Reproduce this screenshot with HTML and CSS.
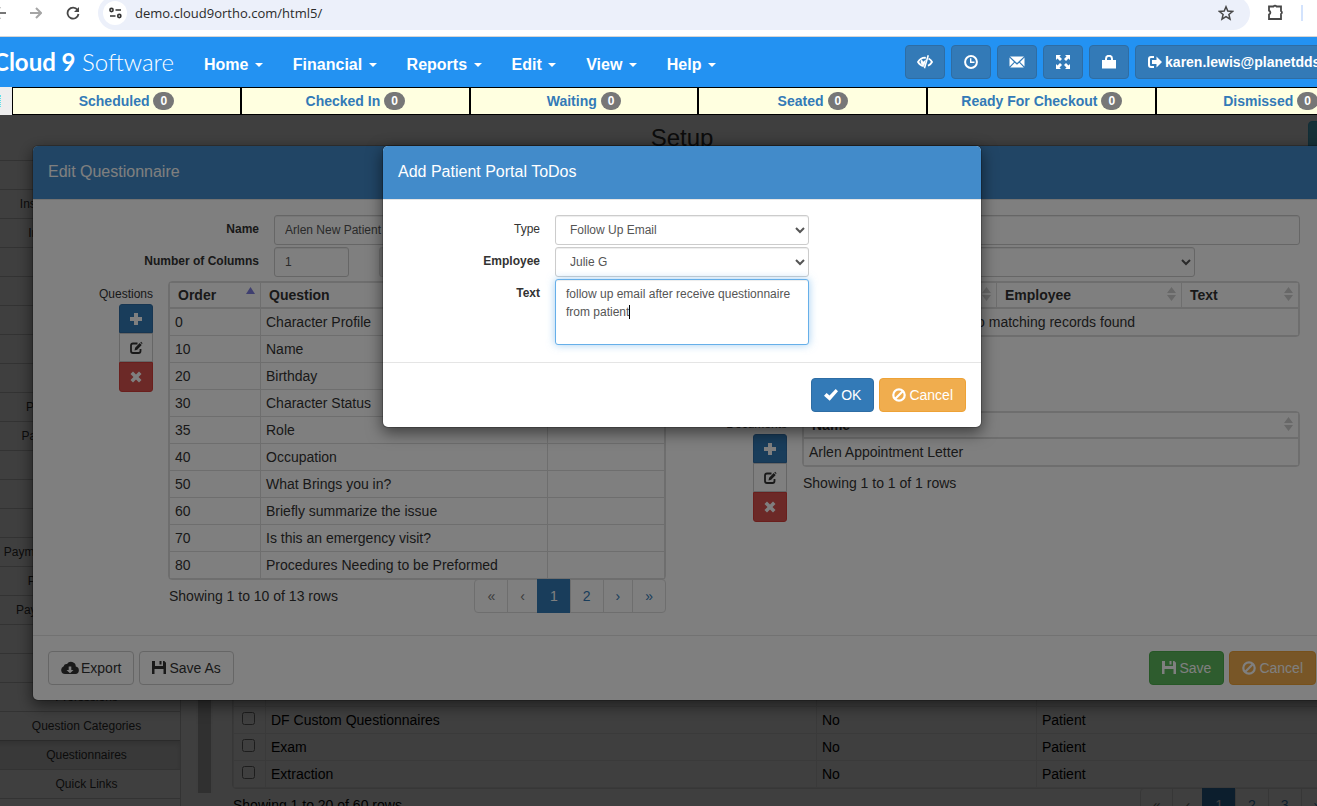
FILE: index.html
```html
<!DOCTYPE html>
<html lang="en">
<head>
    <meta charset="utf-8">
    <title>Cloud 9 Software</title>
    <link rel="stylesheet" href="styles.css">
</head>
<body>
    <svg class="sprite" aria-hidden="true">
        <symbol id="plus" viewBox="0 0 14 14"><path d="M5 1h4v4h4v4H9v4H5V9H1V5h4z"/></symbol>
        <symbol id="edit" viewBox="0 0 14 14"><path d="M8.500 2.500H4Q2 2.500 2 4.500v5.500Q2 12 4 12h5.500q2 0 2-2V8" fill="none" stroke="currentColor" stroke-width="1.800"/><path d="M5.500 9.500l.6-2.800 4.600-4.600 2 2-4.500 4.600zM11.300 1.500l.8-.8 1.500 1.500-.7.8z"/></symbol>
        <symbol id="remove" viewBox="0 0 14 14"><path d="M4 1.500l3 3 3-3L12.500 4l-3 3 3 3-2.500 2.500-3-3-3 3L1.500 10l3-3-3-3z"/></symbol>
        <symbol id="ok" viewBox="0 0 14 14"><path d="M11.700 1L14 3.300 5.700 12.800 0 7.700l2.600-2.800 2.900 2.500z"/></symbol>
        <symbol id="ban" viewBox="0 0 14 14"><circle cx="7" cy="7" r="5.700" fill="none" stroke="currentColor" stroke-width="2.200"/><path d="M3 11l8-8" stroke="currentColor" stroke-width="2.200"/></symbol>
        <symbol id="floppy" viewBox="0 0 14 14"><path d="M0 0h3v5h8V0h1.300L14 1.700V13h-2.500V8h-9v5H0zM7.500 0h2v3.500h-2z"/></symbol>
        <symbol id="cloud" viewBox="0 0 18 14"><path fill-rule="evenodd" d="M4 13A4 4 0 0 1 2.700 5.300 3 3 0 0 1 6 3a4.800 4.800 0 0 1 8.800 2.500A3.800 3.800 0 0 1 14.500 13zM7.700 5.500V9H5.500L9 12.300 12.500 9h-2.200V5.500z"/></symbol>
        <symbol id="eye" viewBox="0 0 16 14"><path d="M6.800 11.200C4.200 10.700 2.200 9 1 7c1.500-2.500 4-4.300 7-4.300l.8.100M11.500 3.500C13 4.300 14.300 5.500 15 7c-.9 1.700-2.300 3-4 3.800" fill="none" stroke="currentColor" stroke-width="1.800"/><path d="M10.500 0L12 .5 8.200 13.500l-1.500-.4z"/><path d="M7.400 10.400A3.500 3.500 0 0 1 4.800 4.300l1.300 2.500L9 4.500z"/></symbol>
        <symbol id="time" viewBox="0 0 14 14"><circle cx="7" cy="7" r="5.900" fill="none" stroke="currentColor" stroke-width="2"/><path d="M6.700 3.200v4h3.800" fill="none" stroke="currentColor" stroke-width="1.400"/></symbol>
        <symbol id="envelope" viewBox="0 0 16 14"><path d="M1 1.500h14L8 8zM.5 2.500L5 7 .5 11.500zM15.500 2.500v9L11 7zM5.700 7.700L8 9.800l2.300-2.100 4.500 4.800H1.200z"/></symbol>
        <symbol id="full" viewBox="0 0 16 14"><path d="M1 0h5L4.500 1.500 7 4 5 6 2.500 3.500 1 5zM15 0v5l-1.500-1.500L11 6 9 4l2.500-2.500L10 0zM1 14V9l1.500 1.500L5 8l2 2-2.500 2.500L6 14zM15 14h-5l1.500-1.500L9 10l2-2 2.500 2.500L15 9z"/></symbol>
        <symbol id="lock" viewBox="0 0 14 14"><path d="M4 6V3.800a3 3 0 0 1 6 0V6" fill="none" stroke="currentColor" stroke-width="2"/><path d="M0 5h14v8.500H0z"/></symbol>
        <symbol id="logout" viewBox="0 0 14 14"><path d="M6 2H3Q1 2 1 4v6q0 2 2 2h3" fill="none" stroke="currentColor" stroke-width="2"/><path d="M8.500 1.500L14 7l-5.500 5.500V9H4V5h4.500z"/></symbol>
        <symbol id="sort" viewBox="0 0 9 14"><path d="M4.500 0L9 6H0zM4.500 14L0 8h9z"/></symbol>
        <symbol id="sort-asc" viewBox="0 0 9 14"><path d="M4.500 0L9 7H0z"/></symbol>
    </svg>

    <div class="browser">
        <div class="browser-nav">
            <svg width="18" height="16" viewBox="0 0 18 16"><path d="M18 8H6M12 2L6 8l6 6" fill="none" stroke="#777" stroke-width="2"/></svg>
            <svg width="12" height="12" viewBox="0 0 12 12"><path d="M0 6h11M6 1l5 5-5 5" fill="none" stroke="#a5a5a5" stroke-width="2"/></svg>
            <svg width="14" height="14" viewBox="0 0 14 14"><path d="M11.500 3.800A5.500 5.500 0 1 0 12.500 8" fill="none" stroke="#474747" stroke-width="1.800"/><path d="M13 1v5H8z" fill="#474747"/></svg>
        </div>
        <div class="address">
            <span class="site-info"><svg width="13" height="12" viewBox="0 0 13 12"><g fill="none" stroke="#333" stroke-width="1.600"><circle cx="2.500" cy="3" r="1.600"/><path d="M6.500 3H12M1 9h5.500"/><circle cx="10.300" cy="9" r="1.600"/></g></svg></span>
            <input class="url" type="text" aria-label="Address" value="demo.cloud9ortho.com/html5/">
            <svg width="16" height="16" viewBox="0 0 16 16"><path d="M8 1.800l1.800 4.300 4.700.4-3.600 3 1.100 4.600L8 11.600l-4 2.500 1.100-4.600-3.600-3 4.700-.4z" fill="none" stroke="#474747" stroke-width="1.500"/></svg>
        </div>
        <svg class="puzzle" width="18" height="18" viewBox="0 0 18 18"><path d="M2 3.500h4.500a1.800 1.800 0 0 1 3 0H14V8a1.700 1.700 0 0 1 0 3v5H2v-4.500a2 2 0 0 0 0-3.800z" fill="none" stroke="#474747" stroke-width="1.800"/></svg>
        <span class="browser-divider"></span>
    </div>

    <div class="app">
        <nav class="navbar">
            <a class="brand" href="#"><b>Cloud 9</b> Software</a>
            <a class="nav-link" href="#">Home <span class="caret"></span></a>
            <a class="nav-link" href="#">Financial <span class="caret"></span></a>
            <a class="nav-link" href="#">Reports <span class="caret"></span></a>
            <a class="nav-link" href="#">Edit <span class="caret"></span></a>
            <a class="nav-link" href="#">View <span class="caret"></span></a>
            <a class="nav-link" href="#">Help <span class="caret"></span></a>
            <div class="nav-tools">
                <button class="btn primary tool" aria-label="Hide"><svg class="icon wide"><use href="#eye"/></svg></button>
                <button class="btn primary tool" aria-label="Time clock"><svg class="icon"><use href="#time"/></svg></button>
                <button class="btn primary tool" aria-label="Messages"><svg class="icon wide"><use href="#envelope"/></svg></button>
                <button class="btn primary tool" aria-label="Full screen"><svg class="icon wide"><use href="#full"/></svg></button>
                <button class="btn primary tool" aria-label="Lock"><svg class="icon"><use href="#lock"/></svg></button>
                <button class="btn primary user"><svg class="icon"><use href="#logout"/></svg>karen.lewis@planetdds.com</button>
            </div>
        </nav>

        <div class="queue">
            <span class="grip"></span>
            <a class="queue-item" href="#">Scheduled <span class="badge">0</span></a>
            <a class="queue-item" href="#">Checked In <span class="badge">0</span></a>
            <a class="queue-item" href="#">Waiting <span class="badge">0</span></a>
            <a class="queue-item" href="#">Seated <span class="badge">0</span></a>
            <a class="queue-item" href="#">Ready For Checkout <span class="badge">0</span></a>
            <a class="queue-item" href="#">Dismissed <span class="badge">0</span></a>
        </div>

        <main class="workspace">
            <header class="page-head">
                <h1 class="page-title">Setup</h1>
                <button class="btn info help" aria-label="Help"></button>
            </header>
            <div class="setup">
                <div class="side">
                    <button class="side-item">Imaging</button>
                    <button class="side-item">Insurance Billing Centers</button>
                    <button class="side-item">Insurance Companies</button>
                    <button class="side-item">Lab Cases</button>
                    <button class="side-item">Letters</button>
                    <button class="side-item">Locations</button>
                    <button class="side-item">Macros</button>
                    <button class="side-item">Offices</button>
                    <button class="side-item">Patient Custom Values</button>
                    <button class="side-item">Patient Portal Templates</button>
                    <button class="side-item">Patient Types</button>
                    <button class="side-item">Patients</button>
                    <button class="side-item">Payers</button>
                    <button class="side-item">Payment Portal Fee Schedules</button>
                    <button class="side-item">Payment Plan Groups</button>
                    <button class="side-item">Payment Surcharge Types</button>
                    <button class="side-item">Procedures</button>
                    <button class="side-item">Products</button>
                    <button class="side-item">Professions</button>
                    <button class="side-item">Question Categories</button>
                    <button class="side-item active">Questionnaires</button>
                    <button class="side-item">Quick Links</button>
                    <button class="side-item">Recalls</button>
                </div>
                <div class="scroll"><span class="thumb"></span></div>
                <section class="listing">
                    <div class="table-box">
                        <table class="grid">
                            <colgroup><col class="c-check"><col class="c-name"><col class="c-active"><col></colgroup>
                            <tr><td class="tick"><input type="checkbox" aria-label="Consent"></td><td>Consent</td><td>No</td><td>Patient</td></tr>
                            <tr><td class="tick"><input type="checkbox" aria-label="DF Custom Questionnaires"></td><td>DF Custom Questionnaires</td><td>No</td><td>Patient</td></tr>
                            <tr><td class="tick"><input type="checkbox" aria-label="Exam"></td><td>Exam</td><td>No</td><td>Patient</td></tr>
                            <tr><td class="tick"><input type="checkbox" aria-label="Extraction"></td><td>Extraction</td><td>No</td><td>Patient</td></tr>
                        </table>
                    </div>
                    <div class="table-foot">
                        <span>Showing 1 to 20 of 60 rows</span>
                        <div class="pages">
                            <a class="off" href="#">«</a><a class="off" href="#">‹</a><a class="on" href="#">1</a><a href="#">2</a><a href="#">3</a><a href="#">›</a><a href="#">»</a>
                        </div>
                    </div>
                </section>
            </div>

            <div class="backdrop"></div>

            <div class="modal">
                <div class="dialog large">
                    <h2 class="dialog-head">Edit Questionnaire</h2>
                    <div class="dialog-body">
                        <div class="form-row">
                            <label class="label" for="name">Name</label>
                            <input class="field" id="name" type="text" value="Arlen New Patient Questionnaire">
                        </div>
                        <div class="form-row">
                            <label class="label" for="columns">Number of Columns</label>
                            <div class="fields">
                                <input class="field columns" id="columns" type="text" value="1">
                                <select class="field kind" aria-label="Audience" disabled><option></option></select>
                                <select class="field" aria-label="Category"><option></option></select>
                            </div>
                        </div>
                        <div class="halves">
                            <div class="part">
                                <div class="part-side">
                                    <span>Questions</span>
                                    <div class="btn-stack">
                                        <button class="btn primary" aria-label="Add question"><svg class="icon"><use href="#plus"/></svg></button>
                                        <button class="btn" aria-label="Edit question"><svg class="icon"><use href="#edit"/></svg></button>
                                        <button class="btn danger" aria-label="Remove question"><svg class="icon"><use href="#remove"/></svg></button>
                                    </div>
                                </div>
                                <div class="part-main">
                                    <div class="table-box">
                                        <table class="grid">
                                            <colgroup><col class="c-order"><col class="c-question"><col></colgroup>
                                            <tr><th>Order<svg class="sort asc"><use href="#sort-asc"/></svg></th><th>Question<svg class="sort"><use href="#sort"/></svg></th><th>Type<svg class="sort"><use href="#sort"/></svg></th></tr>
                                            <tr><td>0</td><td>Character Profile</td><td></td></tr>
                                            <tr><td>10</td><td>Name</td><td></td></tr>
                                            <tr><td>20</td><td>Birthday</td><td></td></tr>
                                            <tr><td>30</td><td>Character Status</td><td></td></tr>
                                            <tr><td>35</td><td>Role</td><td></td></tr>
                                            <tr><td>40</td><td>Occupation</td><td></td></tr>
                                            <tr><td>50</td><td>What Brings you in?</td><td></td></tr>
                                            <tr><td>60</td><td>Briefly summarize the issue</td><td></td></tr>
                                            <tr><td>70</td><td>Is this an emergency visit?</td><td></td></tr>
                                            <tr><td>80</td><td>Procedures Needing to be Preformed</td><td></td></tr>
                                        </table>
                                    </div>
                                    <div class="table-foot">
                                        <span>Showing 1 to 10 of 13 rows</span>
                                        <div class="pages">
                                            <a class="off" href="#">«</a><a class="off" href="#">‹</a><a class="on" href="#">1</a><a href="#">2</a><a href="#">›</a><a href="#">»</a>
                                        </div>
                                    </div>
                                </div>
                            </div>
                            <div class="stack">
                                <div class="part">
                                    <div class="part-side">
                                        <span>ToDos</span>
                                        <div class="btn-stack">
                                            <button class="btn primary" aria-label="Add todo"><svg class="icon"><use href="#plus"/></svg></button>
                                            <button class="btn" aria-label="Edit todo"><svg class="icon"><use href="#edit"/></svg></button>
                                            <button class="btn danger" aria-label="Remove todo"><svg class="icon"><use href="#remove"/></svg></button>
                                        </div>
                                    </div>
                                    <div class="part-main">
                                        <div class="table-box">
                                            <table class="grid">
                                                <colgroup><col class="c-type"><col class="c-employee"><col></colgroup>
                                                <tr><th>Type<svg class="sort"><use href="#sort"/></svg></th><th>Employee<svg class="sort"><use href="#sort"/></svg></th><th>Text<svg class="sort"><use href="#sort"/></svg></th></tr>
                                                <tr><td class="empty" colspan="3">No matching records found</td></tr>
                                            </table>
                                        </div>
                                    </div>
                                </div>
                                <div class="part">
                                    <div class="part-side">
                                        <span>Documents</span>
                                        <div class="btn-stack">
                                            <button class="btn primary" aria-label="Add document"><svg class="icon"><use href="#plus"/></svg></button>
                                            <button class="btn" aria-label="Edit document"><svg class="icon"><use href="#edit"/></svg></button>
                                            <button class="btn danger" aria-label="Remove document"><svg class="icon"><use href="#remove"/></svg></button>
                                        </div>
                                    </div>
                                    <div class="part-main">
                                        <div class="table-box">
                                            <table class="grid">
                                                <tr><th>Name<svg class="sort"><use href="#sort"/></svg></th></tr>
                                                <tr><td>Arlen Appointment Letter</td></tr>
                                            </table>
                                        </div>
                                        <div class="table-foot"><span>Showing 1 to 1 of 1 rows</span></div>
                                    </div>
                                </div>
                            </div>
                        </div>
                    </div>
                    <div class="dialog-foot">
                        <button class="btn"><svg class="icon cloud"><use href="#cloud"/></svg>Export</button>
                        <button class="btn"><svg class="icon"><use href="#floppy"/></svg>Save As</button>
                        <button class="btn success push"><svg class="icon"><use href="#floppy"/></svg>Save</button>
                        <button class="btn warning"><svg class="icon"><use href="#ban"/></svg>Cancel</button>
                    </div>
                </div>
            </div>

            <div class="backdrop"></div>

            <div class="modal">
                <div class="dialog small">
                    <h2 class="dialog-head">Add Patient Portal ToDos</h2>
                    <div class="dialog-body">
                        <div class="form-row">
                            <label class="label plain" for="type">Type</label>
                            <select class="field" id="type"><option>Follow Up Email</option></select>
                        </div>
                        <div class="form-row">
                            <label class="label" for="employee">Employee</label>
                            <select class="field" id="employee"><option>Julie G</option></select>
                        </div>
                        <div class="form-row">
                            <label class="label" for="text">Text</label>
                            <div class="text-wrap">
                                <textarea class="field focus" id="text">follow up email after receive questionnaire from patient</textarea>
                                <span class="cursor"></span>
                            </div>
                        </div>
                    </div>
                    <div class="dialog-foot">
                        <button class="btn primary push"><svg class="icon"><use href="#ok"/></svg>OK</button>
                        <button class="btn warning"><svg class="icon"><use href="#ban"/></svg>Cancel</button>
                    </div>
                </div>
            </div>
        </main>
    </div>
</body>
</html>
```

FILE: styles.css
```css
* {
    box-sizing: border-box;
}

body {
    margin: 0;
    height: 100vh;
    display: flex;
    flex-direction: column;
    overflow: hidden;
    font-family: "Liberation Sans", Arial, sans-serif;
    font-size: 14px;
    line-height: 20px;
    color: #333;
    background: #fff;
}

a {
    text-decoration: none;
    color: #337ab7;
}

svg {
    flex: none;
}

.sprite {
    display: none;
}

.icon {
    width: 14px;
    height: 14px;
    fill: currentColor;
}

.icon.wide {
    width: 16px;
}

.icon.cloud {
    width: 18px;
    margin-right: -1px;
}

/* browser bar */
.browser {
    flex: none;
    display: flex;
    align-items: flex-start;
    height: 37px;
    padding-right: 14px;
    border-bottom: 1px solid #d5d5d5;
    overflow: hidden;
}

.browser-nav {
    display: flex;
    align-items: center;
    gap: 24px;
    height: 26px;
    margin-left: -12px;
    margin-right: 18px;
}

.address {
    flex: 1;
    display: flex;
    align-items: center;
    height: 34px;
    margin-top: -4px;
    padding: 0 16px 0 5px;
    border-radius: 17px;
    background: #ecf0fa;
}

.site-info {
    display: flex;
    align-items: center;
    justify-content: center;
    width: 24px;
    height: 24px;
    border-radius: 50%;
    background: #fff;
}

.url {
    flex: 1;
    margin-left: 8px;
    padding: 0;
    border: 0;
    background: none;
    font-family: "Open Sans", "Noto Sans", sans-serif;
    font-size: 13px;
    color: #2b2b2b;
}

.puzzle {
    margin: 3px 16px 0 17px;
}

.browser-divider {
    width: 2px;
    height: 16px;
    margin-top: 5px;
    background: #d3e3fd;
}

/* the app is wider than the window, its right edge runs off */
.app {
    flex: 1;
    min-height: 0;
    width: calc(100% + 47px);
    display: flex;
    flex-direction: column;
}

.navbar {
    flex: none;
    display: flex;
    align-items: center;
    height: 50px;
    background: #2392f2;
}

.brand {
    margin-left: -7px;
    margin-right: 15px;
    font-family: Lato, sans-serif;
    font-size: 24px;
    font-weight: 300;
    color: #fff;
    white-space: nowrap;
}

.brand b {
    font-weight: 700;
}

.nav-link {
    padding: 5px 15px 0;
    font-size: 16px;
    font-weight: bold;
    color: #fff;
    white-space: nowrap;
}

.caret {
    display: inline-block;
    margin-left: 2px;
    border-top: 4px solid #fff;
    border-left: 4px solid transparent;
    border-right: 4px solid transparent;
    vertical-align: middle;
}

.nav-tools {
    display: flex;
    gap: 6px;
    margin-left: auto;
    margin-right: -2px;
}

.btn {
    display: inline-flex;
    align-items: center;
    justify-content: center;
    gap: 3px;
    height: 34px;
    padding: 0 12px;
    border: 1px solid #ccc;
    border-radius: 4px;
    background: #fff;
    color: #333;
    font-family: inherit;
    font-size: 14px;
    line-height: 20px;
    white-space: nowrap;
}

.primary {
    background: #337ab7;
    border-color: #2e6da4;
    color: #fff;
}

.success {
    background: #5cb85c;
    border-color: #4cae4c;
    color: #fff;
}

.warning {
    background: #f0ad4e;
    border-color: #eea236;
    color: #fff;
}

.danger {
    background: #d9534f;
    border-color: #d43f3a;
    color: #fff;
}

.info {
    background: #5bc0de;
    border-color: #46b8da;
}

.tool {
    width: 40px;
    padding: 0;
}

.user {
    font-weight: bold;
}

.queue {
    flex: none;
    display: flex;
    height: 28px;
    margin-right: -21px;
    background: #eee;
}

.grip {
    width: 12px;
    margin: 8px 0;
    border-left: 1px dotted #5fe0ea;
}

.queue-item {
    flex: 1;
    display: flex;
    align-items: center;
    justify-content: center;
    gap: 4px;
    border: 1px solid #000;
    background: #ffffe0;
    font-weight: bold;
}

.badge {
    padding: 0 7px;
    border-radius: 10px;
    background: #777;
    color: #fff;
    font-size: 12px;
    line-height: 18px;
}

/* setup page */
.workspace {
    flex: 1;
    min-height: 0;
    position: relative;
    overflow: hidden;
}

.page-head {
    display: flex;
    justify-content: center;
    height: 45px;
    padding-top: 6px;
    position: relative;
}

.page-title {
    margin: 0;
    font-size: 24px;
    font-weight: normal;
    line-height: 34px;
}

.help {
    position: absolute;
    right: 16px;
    width: 40px;
}

.setup {
    display: flex;
    align-items: flex-start;
}

.side {
    width: 188px;
    margin-left: -7px;
    margin-right: 15px;
    border-right: 1px solid #ccc;
}

.side-item {
    display: block;
    width: 100%;
    height: 29px;
    padding: 0;
    border: 0;
    border-top: 1px solid #ccc;
    background: #fff;
    color: #333;
    font-family: inherit;
    font-size: 12px;
    text-align: center;
}

.side-item.active {
    background: #e6e6e6;
    border-color: #adadad;
    box-shadow: inset 0 3px 5px rgba(0, 0, 0, .125);
}

.scroll {
    width: 17px;
    height: 633px;
    padding: 0 2px;
    background: #f8f8f8;
}

.thumb {
    display: block;
    height: 100%;
    background: #c1c1c1;
}

.listing {
    flex: 1;
    padding: 518px 0 0 19px;
    color: #000;
}

.table-box {
    border: 1px solid #ddd;
    border-radius: 4px;
}

.grid {
    width: 100%;
    table-layout: fixed;
    border-collapse: collapse;
}

.grid td {
    height: 27px;
    padding: 3px 5px;
    border: 1px solid #ddd;
    white-space: nowrap;
}

.grid th {
    padding: 2px 8px;
    border: 1px solid #ddd;
    border-bottom: 2px solid #ddd;
    text-align: left;
    white-space: nowrap;
}

.listing .grid td {
    border-color: #e8e8e8;
}

.grid .empty {
    text-align: center;
}

.grid .tick {
    padding: 0 8px;
}

.tick input {
    display: block;
    margin: 0 0 3px;
}

.sort {
    float: right;
    width: 9px;
    height: 14px;
    margin: 2px -3px 0 0;
    fill: #d0d0d0;
}

.sort.asc {
    fill: #7f7fe0;
}

.c-check {
    width: 32px;
}

.c-name {
    width: 551px;
}

.c-active {
    width: 220px;
}

.c-order {
    width: 91px;
}

.c-question {
    width: 287px;
}

.c-type {
    width: 193px;
}

.c-employee {
    width: 185px;
}

.table-foot {
    display: flex;
    justify-content: space-between;
    align-items: center;
    height: 34px;
    margin-top: -1px;
    padding-left: 1px;
}

.pages {
    display: flex;
}

.pages a {
    padding: 6px 12px;
    border: 1px solid #ddd;
    margin-left: -1px;
}

.pages a:first-child {
    border-radius: 4px 0 0 4px;
}

.pages a:last-child {
    border-radius: 0 4px 4px 0;
}

.pages .off {
    color: #777;
}

.pages .on {
    background: #337ab7;
    border-color: #337ab7;
    color: #fff;
}

/* dialogs */
.backdrop {
    position: absolute;
    inset: 0;
    background: rgba(0, 0, 0, .5);
}

.modal {
    position: absolute;
    inset: 0;
    padding-top: 30px;
}

.dialog {
    margin: 0 auto;
    border: 1px solid rgba(0, 0, 0, .2);
    border-radius: 6px;
    background: #fff;
    background-clip: padding-box;
    box-shadow: 0 5px 15px rgba(0, 0, 0, .5);
}

.large {
    width: calc(100% - 64px);
}

.small {
    width: 600px;
}

.dialog-head {
    margin: 0;
    padding: 14px 15px 16px;
    border-bottom: 1px solid #e5e5e5;
    border-radius: 5px 5px 0 0;
    background: #428bca;
    background-clip: padding-box;
    color: #fff;
    font-size: 16px;
    font-weight: normal;
    line-height: 23px;
}

.dialog-body {
    padding: 15px;
    font-size: 12px;
}

.dialog-foot {
    display: flex;
    gap: 5px;
    padding: 15px;
    border-top: 1px solid #e5e5e5;
}

.push {
    margin-left: auto;
}

.form-row {
    display: grid;
    grid-template-columns: 211px 1fr;
    gap: 15px;
    margin: 0 16px 2px 0;
}

.small .form-row {
    grid-template-columns: 142px 254px;
    margin-right: 0;
}

.label {
    padding-top: 4px;
    font-weight: bold;
    text-align: right;
}

.label.plain {
    font-weight: normal;
}

.field {
    width: 100%;
    height: 30px;
    padding: 5px 10px;
    border: 1px solid #ccc;
    border-radius: 3px;
    background-color: #fff;
    box-shadow: inset 0 1px 1px rgba(0, 0, 0, .075);
    color: #555;
    font-family: inherit;
    font-size: 12px;
    line-height: 18px;
}

.fields {
    display: flex;
    gap: 30px;
    margin-right: 105px;
}

.field.columns,
.field.kind {
    flex: none;
    width: 75px;
}

.field:disabled {
    background-color: #e6e6e6;
}

.text-wrap {
    position: relative;
    display: flex;
}

textarea.field {
    height: 66px;
    resize: none;
}

.focus {
    border-color: #66afe9;
    box-shadow: inset 0 1px 1px rgba(0, 0, 0, .075), 0 0 8px rgba(102, 175, 233, .6);
}

.cursor {
    position: absolute;
    left: 74px;
    top: 26px;
    width: 1px;
    height: 14px;
    background: #000;
}

.halves {
    display: grid;
    grid-template-columns: 1fr 1fr;
    padding: 2px 0 7px;
}

.part {
    display: grid;
    grid-template-columns: 105px 1fr;
    gap: 15px;
    padding-right: 16px;
    font-size: 14px;
}

.stack {
    display: flex;
    flex-direction: column;
    gap: 19px;
}

.part-side {
    display: flex;
    flex-direction: column;
    align-items: flex-end;
    padding-top: 3px;
    font-size: 12px;
}

.btn-stack {
    display: flex;
    flex-direction: column;
    width: 34px;
}

.btn-stack .btn {
    height: 29px;
    padding: 0;
    border-radius: 0;
}

.btn-stack .btn:first-child {
    border-radius: 3px 3px 0 0;
}

.btn-stack .btn:last-child {
    height: 30px;
    border-radius: 0 0 3px 3px;
}
```
